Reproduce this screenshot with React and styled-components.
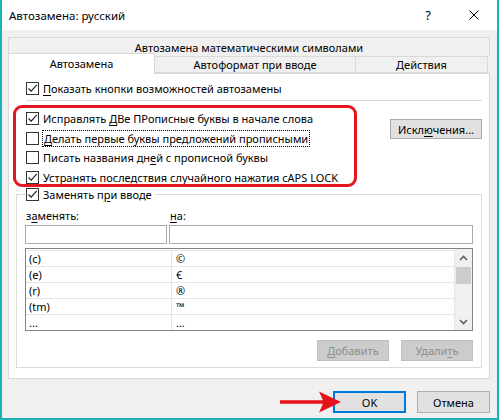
import React from 'react'
import styled, { createGlobalStyle } from 'styled-components'

const GlobalStyle = createGlobalStyle`
  html, body {
    margin: 0;
    padding: 0;
    background: #ffffff;
  }
  body {
    font-family: 'Segoe UI', 'Noto Sans', sans-serif;
    font-size: 11px;
    color: #000;
  }
  * {
    box-sizing: border-box;
  }
`

const Window = styled.div`
  width: 499px;
  height: 420px;
  display: flex;
  flex-direction: column;
  border: 2px solid #19b2b5;
  border-top: none;
  background: #f0f0f0;
`

const TitleBar = styled.div`
  height: 30px;
  flex: none;
  display: flex;
  align-items: center;
  background: #fff;
  padding-left: 7px;
`

const Title = styled.div`
  flex: 1;
  font-size: 11.5px;
`

const CaptionButton = styled.div`
  width: 46px;
  height: 30px;
  display: flex;
  align-items: center;
  justify-content: center;
  font-size: 13px;
`

const Body = styled.div`
  flex: 1;
  display: flex;
  flex-direction: column;
  padding: 7px 7px 0 6px;
`

const TabTopRow = styled.div`
  height: 19px;
  display: flex;
  align-items: center;
  justify-content: center;
  border: 1px solid #d9d9d9;
  border-bottom: none;
  background: #f0f0f0;
`

const TabRow = styled.div`
  height: 17px;
  display: flex;
  align-items: flex-end;
`

const Tab = styled.div`
  width: ${p => p.w}px;
  height: ${p => (p.active ? 21 : 17)}px;
  margin-bottom: ${p => (p.active ? -1 : 0)}px;
  margin-left: ${p => (p.first ? 0 : -1)}px;
  display: flex;
  align-items: center;
  justify-content: center;
  padding-bottom: ${p => (p.active ? 1 : 0)}px;
  border: 1px solid #d9d9d9;
  border-bottom: ${p => (p.active ? 'none' : '1px solid #d9d9d9')};
  background: ${p => (p.active ? '#ffffff' : '#f0f0f0')};
  position: relative;
  z-index: ${p => (p.active ? 1 : 0)};
`

const Panel = styled.div`
  background: #fff;
  border: 1px solid #d9d9d9;
  padding: 4px 0 10px 0;
  display: flex;
  flex-direction: column;
`

const OptionRow = styled.div`
  display: flex;
  align-items: center;
  gap: 4px;
  height: ${p => p.h || 20}px;
  margin-left: ${p => p.indent || 0}px;
  white-space: nowrap;
`

const Box = styled.span`
  width: 13px;
  height: 13px;
  flex: none;
  border: 1px solid #333333;
  background: #fff;
  display: flex;
  align-items: center;
  justify-content: center;
`

const Key = styled.span`
  text-decoration: underline;
  text-underline-offset: 2px;
`

const Focus = styled.span`
  outline: 1px dotted #000;
  outline-offset: 0;
  padding: 0 1px;
`

const Separator = styled.div`
  height: 1px;
  margin: 2px 7px 0 17px;
  background: #d9d9d9;
`

const Options = styled.div`
  position: relative;
  margin-top: 8px;
  display: flex;
  align-items: flex-start;
`

const OptionList = styled.div`
  flex: 1;
  display: flex;
  flex-direction: column;
  margin-left: 17px;
`

const Highlight = styled.div`
  position: absolute;
  left: 4px;
  top: -4px;
  width: 344px;
  height: 82px;
  border: 3px solid #e4161f;
  border-radius: 9px;
  pointer-events: none;
`

const Button = styled.div`
  width: ${p => p.w || 73}px;
  height: ${p => p.h || 21}px;
  flex: none;
  display: flex;
  align-items: center;
  justify-content: center;
  background: ${p => (p.disabled ? '#cccccc' : '#e1e1e1')};
  border: ${p => (p.primary ? '2px solid #0078d7' : p.disabled ? '1px solid #bfbfbf' : '1px solid #adadad')};
  color: ${p => (p.disabled ? '#8d8d8d' : '#000')};
  white-space: nowrap;
`

const ExceptionsButton = styled(Button)`
  margin-top: 10px;
  margin-right: 7px;
`

const Group = styled.fieldset`
  margin: 0 7px;
  min-width: 0;
  border: 1px solid #dcdcdc;
  padding: 8px 8px 6px 8px;
`

const GroupLegend = styled.legend`
  height: 14px;
  display: flex;
  align-items: center;
  gap: 4px;
  padding: 0 3px 0 0;
  margin-left: 1px;
  white-space: nowrap;
`

const FieldGrid = styled.div`
  display: grid;
  grid-template-columns: 142px 1fr;
  column-gap: 2px;
`

const FieldLabel = styled.div`
  height: 14px;
  line-height: 14px;
  padding-left: 1px;
  margin-bottom: 2px;
`

const TextInput = styled.div`
  height: 19px;
  border: 1px solid #ababab;
  background: #fff;
`

const List = styled.div`
  margin-top: 4px;
  height: 83px;
  border: 1px solid #828282;
  background: #fff;
  display: flex;
`

const ListRows = styled.div`
  flex: 1;
  padding-top: 1px;
  border-right: 1px solid #e6e6e6;
`

const ListRow = styled.div`
  display: grid;
  grid-template-columns: 145px 1fr;
  height: 16px;
  border-top: 1px solid #e6e6e6;
`

const Cell = styled.div`
  line-height: 15px;
  padding-left: ${p => (p.second ? 4 : 3)}px;
  border-left: ${p => (p.second ? '1px solid #e6e6e6' : 'none')};
  white-space: nowrap;
`

const ScrollBar = styled.div`
  width: 17px;
  flex: none;
  background: #f0f0f0;
  display: flex;
  flex-direction: column;
`

const ScrollArrow = styled.div`
  height: 17px;
  flex: none;
  display: flex;
  align-items: center;
  justify-content: center;
`

const ScrollThumb = styled.div`
  height: 17px;
  margin: 1px 1px 0 1px;
  background: #cdcdcd;
`

const ScrollSpace = styled.div`
  flex: 1;
`

const GroupButtons = styled.div`
  margin-top: 9px;
  display: flex;
  justify-content: flex-end;
  gap: 12px;
`

const Footer = styled.div`
  margin-top: 10px;
  display: flex;
  justify-content: flex-end;
  align-items: center;
`

const Arrow = styled.svg`
  flex: none;
  margin-right: -9px;
  position: relative;
  z-index: 1;
`

const CancelButton = styled(Button)`
  margin-left: 11px;
`

const Check = ({ checked }) => (
  <Box>
    {checked && (
      <svg width="11" height="11" viewBox="0 0 11 11">
        <path d="M1.5 5.5 L4.2 8.2 L9.8 1.8" fill="none" stroke="#222" strokeWidth="1.2" />
      </svg>
    )}
  </Box>
)

const Chevron = ({ down }) => (
  <svg width="9" height="6" viewBox="0 0 9 6">
    <path
      d={down ? 'M1 1 L4.5 4.5 L8 1' : 'M1 5 L4.5 1.5 L8 5'}
      fill="none"
      stroke="#606060"
      strokeWidth="1.6"
    />
  </svg>
)

const rows = [
  ['(c)', '©'],
  ['(e)', '€'],
  ['(r)', '®'],
  ['(tm)', '™'],
  ['...', '…'],
]

export default function App() {
  return (
    <>
      <GlobalStyle />
      <Window>
        <TitleBar>
          <Title>Автозамена: русский</Title>
          <CaptionButton>?</CaptionButton>
          <CaptionButton>
            <svg width="10" height="10" viewBox="0 0 10 10">
              <path d="M0.5 0.5 L9.5 9.5 M9.5 0.5 L0.5 9.5" stroke="#000" strokeWidth="1" />
            </svg>
          </CaptionButton>
        </TitleBar>
        <Body>
          <TabTopRow>Автозамена математическими символами</TabTopRow>
          <TabRow>
            <Tab first active w={147}>Автозамена</Tab>
            <Tab w={202}>Автоформат при вводе</Tab>
            <Tab w={133}>Действия</Tab>
          </TabRow>
          <Panel>
            <OptionRow indent={17}>
              <Check checked />
              <span><Key>П</Key>оказать кнопки возможностей автозамены</span>
            </OptionRow>
            <Separator />
            <Options>
              <Highlight />
              <OptionList>
                <OptionRow h={19.6}>
                  <Check checked />
                  <span>Исправлять <Key>Д</Key>Ве ПРописные буквы в начале слова</span>
                </OptionRow>
                <OptionRow h={19.6}>
                  <Check />
                  <Focus><Key>Д</Key>елать первые буквы предложений прописными</Focus>
                </OptionRow>
                <OptionRow h={19.6}>
                  <Check />
                  <span>Писать названия дн<Key>е</Key>й с прописной буквы</span>
                </OptionRow>
                <OptionRow h={19.6}>
                  <Check checked />
                  <span>Устранять последствия сл<Key>у</Key>чайного нажатия cAPS LOCK</span>
                </OptionRow>
              </OptionList>
              <ExceptionsButton w={92} h={20}>Искл<Key>ю</Key>чения...</ExceptionsButton>
            </Options>
            <Group>
              <GroupLegend>
                <Check checked />
                <span>Заменять п<Key>р</Key>и вводе</span>
              </GroupLegend>
              <FieldGrid>
                <FieldLabel>з<Key>а</Key>менять:</FieldLabel>
                <FieldLabel><Key>н</Key>а:</FieldLabel>
                <TextInput />
                <TextInput />
              </FieldGrid>
              <List>
                <ListRows>
                  {rows.map(([from, to]) => (
                    <ListRow key={from}>
                      <Cell>{from}</Cell>
                      <Cell second>{to}</Cell>
                    </ListRow>
                  ))}
                </ListRows>
                <ScrollBar>
                  <ScrollArrow><Chevron /></ScrollArrow>
                  <ScrollThumb />
                  <ScrollSpace />
                  <ScrollArrow><Chevron down /></ScrollArrow>
                </ScrollBar>
              </List>
              <GroupButtons>
                <Button disabled w={72}><Key>Д</Key>обавить</Button>
                <Button disabled w={72}>Удали<Key>т</Key>ь</Button>
              </GroupButtons>
            </Group>
          </Panel>
          <Footer>
            <Arrow width="62" height="26" viewBox="0 0 62 26">
              <path d="M0 11.3 L43 11.3 L39 2.5 L61 13 L39 23.5 L43 14.7 L0 14.7 Z" fill="#e8121b" />
            </Arrow>
            <Button primary w={73} h={22}>OK</Button>
            <CancelButton w={73} h={22}>Отмена</CancelButton>
          </Footer>
        </Body>
      </Window>
    </>
  )
}
